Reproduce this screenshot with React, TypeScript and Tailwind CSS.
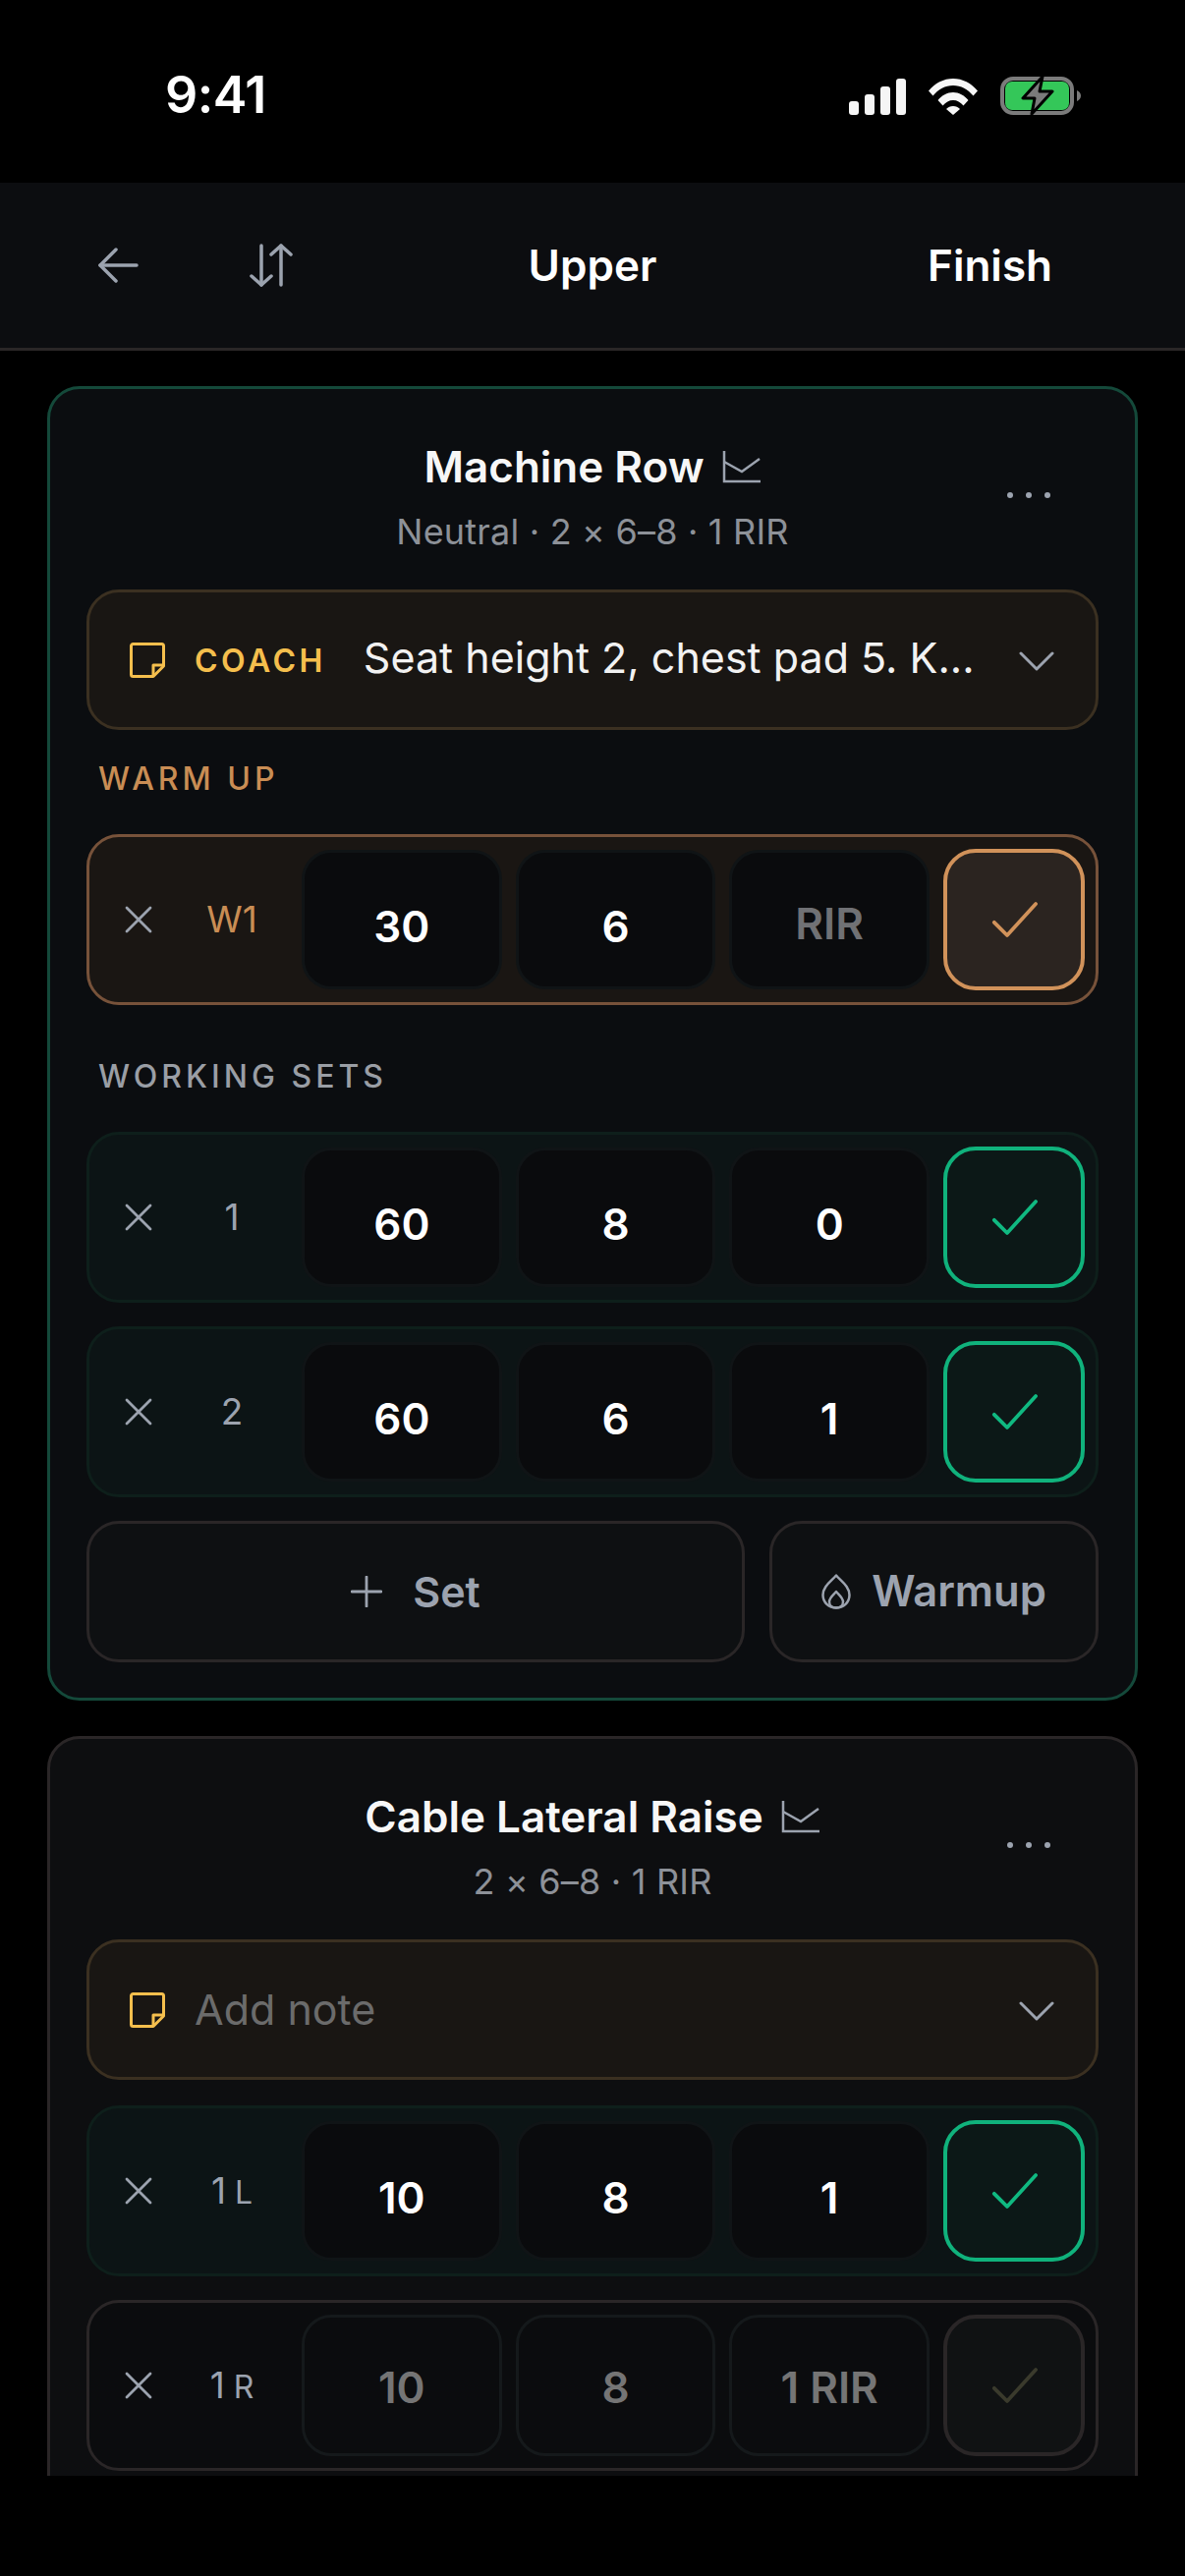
import { ReactNode } from "react"

const font = { fontFamily: "Inter, sans-serif" }

function Signal() {
  return (
    <div className="flex items-end gap-[6px] h-[37px]">
      <div className="w-[10px] h-[14px] rounded-[3px] bg-[#f5f5f5]" />
      <div className="w-[10px] h-[21px] rounded-[3px] bg-[#f5f5f5]" />
      <div className="w-[10px] h-[29px] rounded-[3px] bg-[#f5f5f5]" />
      <div className="w-[10px] h-[37px] rounded-[3px] bg-[#f5f5f5]" />
    </div>
  )
}

function Wifi() {
  return (
    <svg width="50" height="37" viewBox="0 0 50 37" fill="#f7f7f7">
      <path d="M0 12.500C6.500 4.700 15.300 0 25 0s18.500 4.700 25 12.500l-4.500 5C40 11 33 7 25 7S10 11 4.500 17.500z" />
      <path d="M9.500 22C13.500 17 19 14 25 14s11.500 3 15.500 8l-5 5.500C32.500 24 29 22 25 22s-7.500 2-10.500 5.500z" />
      <path d="M18 31c1.800-1.900 4.300-3 7-3s5.200 1.100 7 3l-7 6z" />
    </svg>
  )
}

function Battery() {
  return (
    <svg width="82" height="40" viewBox="0 0 82 40">
      <rect x="2" y="2" width="71" height="35" rx="11" fill="none" stroke="#7b7b7b" strokeWidth="4" />
      <rect x="5" y="5" width="65" height="29" rx="7" fill="#34c759" />
      <path d="M78 14c2.500 1 4 3 4 5.500s-1.500 4.500-4 5.500z" fill="#7b7b7b" />
      <path d="M43 0 23 22h12l-3 16 21-23H40z" fill="#7b7b7b" stroke="#000" strokeWidth="3" strokeLinejoin="round" />
    </svg>
  )
}

function StatusBar() {
  return (
    <div className="h-[186px] bg-black flex items-start justify-between pl-[168px] pr-[106px] pt-[78px] shrink-0">
      <span className="text-[52px] leading-[38px] font-semibold text-white tracking-[-0.5px]" style={font}>
        9:41
      </span>
      <div className="flex items-center gap-[23px]">
        <Signal />
        <Wifi />
        <Battery />
      </div>
    </div>
  )
}

function Header() {
  return (
    <header className="relative h-[171px] bg-[#0c0d10] border-b-[3px] border-[#2a2627] flex items-center justify-between pl-[99px] pr-[135px] shrink-0">
      <div className="flex items-center gap-[113px]">
        <svg width="42" height="36" viewBox="0 0 42 36" fill="none" stroke="#9ca3af" strokeWidth="3.500" strokeLinecap="round" strokeLinejoin="round">
          <path d="M19 2 3 18l16 16" />
          <path d="M3 18h37" />
        </svg>
        <svg width="44" height="44" viewBox="0 0 44 44" fill="none" stroke="#9ca3af" strokeWidth="3.500" strokeLinecap="round" strokeLinejoin="round">
          <path d="M2 33l10 9 10-9" />
          <path d="M12 42V2" />
          <path d="M22 11l10-9 10 9" />
          <path d="M32 2v40" />
        </svg>
      </div>
      <span className="absolute left-1/2 -translate-x-1/2 text-[44px] font-semibold text-white" style={font}>
        Upper
      </span>
      <span className="text-[44px] font-semibold text-white" style={font}>
        Finish
      </span>
    </header>
  )
}

function NoteIcon() {
  return (
    <svg width="36" height="36" viewBox="0 0 36 36" fill="none" stroke="#f5bf4d" strokeWidth="3" strokeLinejoin="round" className="shrink-0">
      <path d="M3.500 1.500h29a2 2 0 0 1 2 2V24L24 34.500H3.500a2 2 0 0 1-2-2v-29a2 2 0 0 1 2-2z" />
      <path d="M24 34V23h10.500" />
    </svg>
  )
}

function Chevron() {
  return (
    <svg width="36" height="20" viewBox="0 0 36 20" fill="none" stroke="#9ca3af" strokeWidth="3" strokeLinecap="round" strokeLinejoin="round" className="shrink-0 mt-[2px]">
      <path d="M2 2l16 16L34 2" />
    </svg>
  )
}

function ChartIcon() {
  return (
    <svg width="40" height="34" viewBox="0 0 40 34" fill="none" stroke="#9ca3af" strokeWidth="2.500" className="shrink-0">
      <path d="M2 1v31h37" />
      <path d="M2 12l18 10 18-13" />
    </svg>
  )
}

function CloseIcon() {
  return (
    <svg width="28" height="28" viewBox="0 0 28 28" fill="none" stroke="#9ca3af" strokeWidth="2.800" strokeLinecap="round" className="shrink-0">
      <path d="M2 2l24 24M26 2 2 26" />
    </svg>
  )
}

function CheckIcon({ color }: { color: string }) {
  return (
    <svg width="47" height="36" viewBox="0 0 50 38" fill="none" stroke={color} strokeWidth="4" strokeLinecap="round" strokeLinejoin="round">
      <path d="M3 22l14 14L48 2" />
    </svg>
  )
}

function CardTitle({ title, sub }: { title: string; sub: string }) {
  return (
    <div className="relative flex flex-col items-center h-[204px] pt-[43px]">
      <div className="flex items-center gap-[18px] h-[72px]">
        <span className="text-[44px] leading-[72px] font-semibold text-[#f7f7f7]" style={font}>
          {title}
        </span>
        <ChartIcon />
      </div>
      <span className="text-[36px] leading-[48px] mt-[6px] tracking-[0.2px] text-[#8d9198]" style={font}>
        {sub}
      </span>
      <div className="absolute right-[49px] top-[105px] flex gap-[13px]">
        <div className="w-[6px] h-[6px] rounded-full bg-[#9ca3af]" />
        <div className="w-[6px] h-[6px] rounded-full bg-[#9ca3af]" />
        <div className="w-[6px] h-[6px] rounded-full bg-[#9ca3af]" />
      </div>
    </div>
  )
}

function Note({ children }: { children: ReactNode }) {
  return (
    <div className="h-[143px] rounded-[33px] border-[3px] border-[#3b3021] bg-[#191613] flex items-center pl-[41px] pr-[42px]">
      <NoteIcon />
      <div className="flex-1 min-w-0 flex items-center ml-[30px]">{children}</div>
      <Chevron />
    </div>
  )
}

type RowKind = "warm" | "done" | "idle"

const rowStyles: Record<RowKind, string> = {
  warm: "border-[#77523a] bg-[#1a1613]",
  done: "border-[#0e1f1b] bg-[#0c1415]",
  idle: "border-[#2a2627] bg-[#0b0c0e]",
}

const checkStyles: Record<RowKind, string> = {
  warm: "border-[#d1925a] bg-[#2b2420]",
  done: "border-[#10b27c] bg-[#0c1817]",
  idle: "border-[#2a2627] bg-[#101213]",
}

const checkColors: Record<RowKind, string> = {
  warm: "#d1925a",
  done: "#10b981",
  idle: "#3a3a2c",
}

type Field = { value: string; dim?: boolean }

function SetRow({ kind, label, suffix, fields }: { kind: RowKind; label: string; suffix?: string; fields: Field[] }) {
  const idle = kind === "idle"
  return (
    <div className={`h-[174px] rounded-[33px] border-[3px] flex items-center pr-[11px] ${rowStyles[kind]}`}>
      <div className="w-[36px] shrink-0" />
      <CloseIcon />
      <div className="w-[152px] shrink-0 flex items-baseline justify-center pl-[10px]" style={font}>
        <span className={`text-[37px] ${kind === "warm" ? "text-[#c98d54]" : "text-[#9ca3af]"}`}>{label}</span>
        {suffix && <span className="text-[32px] text-[#9ca3af] ml-[9px]">{suffix}</span>}
      </div>
      <div className="flex-1 grid grid-cols-3 gap-[14px] mr-[14px]">
        {fields.map((f, i) => (
          <div
            key={i}
            className={`flex items-center justify-center rounded-[30px] border-[3px] ${
              idle
                ? "h-[144px] pt-[4px] bg-[#0b0c0e] border-[#15191b]"
                : f.dim
                  ? "h-[142px] pt-[7px] bg-[#0a0b0d] border-[#101416]"
                  : "h-[142px] pt-[14px] bg-[#0a0b0d] border-[#101416]"
            }`}
          >
            <span
              className={
                f.dim
                  ? "font-semibold text-[44px] text-[#707174]"
                  : idle
                    ? "font-semibold text-[44px] text-[#757575]"
                    : "font-semibold text-[44px] text-white"
              }
              style={font}
            >
              {f.value}
            </span>
          </div>
        ))}
      </div>
      <div className={`w-[144px] h-[144px] shrink-0 rounded-[33px] border-[4px] flex items-center justify-center ${checkStyles[kind]}`}>
        <CheckIcon color={checkColors[kind]} />
      </div>
    </div>
  )
}

function SectionLabel({ text, color, tall }: { text: string; color: string; tall?: boolean }) {
  return (
    <div className={`flex items-end pl-[12px] pb-[37px] ${tall ? "h-[129px]" : "h-[106px]"}`}>
      <span className={`text-[32px] leading-[38px] font-medium tracking-[4px] ${color}`} style={font}>
        {text}
      </span>
    </div>
  )
}

function ActionButtons() {
  return (
    <div className="flex gap-[25px] mt-[24px]">
      <div className="flex-1 h-[144px] rounded-[33px] border-[3px] border-[#2a2627] bg-[#0e1012] flex items-center justify-center gap-[31px]">
        <svg width="32" height="32" viewBox="0 0 32 32" fill="none" stroke="#9ca3af" strokeWidth="2.800" strokeLinecap="round">
          <path d="M16 1v30M1 16h30" />
        </svg>
        <span className="text-[43px] font-semibold text-[#9ca3af]" style={font}>
          Set
        </span>
      </div>
      <div className="w-[335px] h-[144px] rounded-[33px] border-[3px] border-[#2a2627] bg-[#0e1012] flex items-center justify-center gap-[21px]">
        <svg width="30" height="36" viewBox="0 0 30 36" fill="none" stroke="#9ca3af" strokeWidth="2.500" strokeLinejoin="round">
          <path d="M15 1.500C20 7.500 28.500 12.500 28.500 21.500 28.500 29 22.500 34.500 15 34.500S1.500 29 1.500 21.500C1.500 12.500 10 7.500 15 1.500z" />
          <path d="M15 18c2.500 3 7 6 7 10.500 0 3.500-3 6-7 6s-7-2.500-7-6C8 24 12.500 21 15 18z" />
        </svg>
        <span className="text-[43.5px] font-semibold text-[#9ca3af]" style={font}>
          Warmup
        </span>
      </div>
    </div>
  )
}

export default function App() {
  return (
    <div className="w-[1206px] h-[2622px] bg-black flex flex-col overflow-hidden">
      <StatusBar />
      <Header />
      <main className="h-[2163px] shrink-0 overflow-hidden px-[48px] pt-[36px] flex flex-col gap-[36px]">
        <section className="shrink-0 rounded-[33px] border-[3px] border-[#14493a] bg-[#0b0d10] px-[37px] pb-[36px]">
          <CardTitle title="Machine Row" sub="Neutral · 2 × 6–8 · 1 RIR" />
          <Note>
            <span className="text-[32px] mt-[2px] font-semibold tracking-[3.5px] text-[#f5bf4d] mr-[38px] shrink-0" style={font}>
              COACH
            </span>
            <span className="text-[43px] pb-[4px] text-[#f2f2f2] truncate" style={font}>
              Seat height 2, chest pad 5. K...
            </span>
          </Note>
          <SectionLabel text="WARM UP" color="text-[#c98d54]" />
          <SetRow kind="warm" label="W1" fields={[{ value: "30" }, { value: "6" }, { value: "RIR", dim: true }]} />
          <SectionLabel text="WORKING SETS" color="text-[#9a9ea5]" tall />
          <div className="flex flex-col gap-[24px]">
            <SetRow kind="done" label="1" fields={[{ value: "60" }, { value: "8" }, { value: "0" }]} />
            <SetRow kind="done" label="2" fields={[{ value: "60" }, { value: "6" }, { value: "1" }]} />
          </div>
          <ActionButtons />
        </section>

        <section className="shrink-0 rounded-[33px] border-[3px] border-[#2a2627] bg-[#0d0e10] px-[37px] pb-[35px]">
          <CardTitle title="Cable Lateral Raise" sub="2 × 6–8 · 1 RIR" />
          <Note>
            <span className="text-[43px] text-[#6b6b6b]" style={font}>
              Add note
            </span>
          </Note>
          <div className="flex flex-col gap-[24px] mt-[26px]">
            <SetRow kind="done" label="1" suffix="L" fields={[{ value: "10" }, { value: "8" }, { value: "1" }]} />
            <SetRow kind="idle" label="1" suffix="R" fields={[{ value: "10" }, { value: "8" }, { value: "1 RIR" }]} />
          </div>
        </section>
      </main>
    </div>
  )
}
